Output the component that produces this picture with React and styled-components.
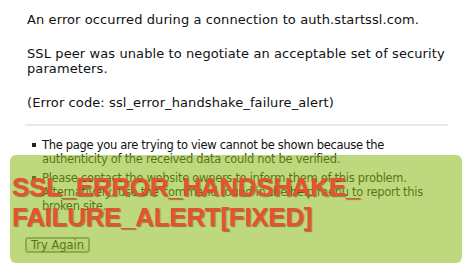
import styled, { createGlobalStyle } from "styled-components";

const GlobalStyle = createGlobalStyle`
  html, body {
    margin: 0;
    padding: 0;
    background: #ffffff;
  }
  body {
    font-family: "DejaVu Sans", "Liberation Sans", sans-serif;
    color: #111111;
  }
`

const Page = styled.div`
  position: relative;
  width: 474px;
  height: 273px;
  overflow: hidden;
  background: #ffffff;
`

const ErrorBody = styled.div`
  padding: 12px 0 0 27px;
`

const Messages = styled.div`
  display: flex;
  flex-direction: column;
  gap: 19px;
  font-size: 13px;
  line-height: 15px;
  letter-spacing: 0.1px;
`

const Message = styled.p`
  margin: 0;
`

const Divider = styled.hr`
  margin: 14px 26px 0 -2px;
  border: none;
  border-top: 2px solid #e8e8e8;
`

const Bullets = styled.ul`
  margin: 12px 0 0;
  padding: 0 0 0 15px;
  list-style: none;
  font-size: 11.5px;
  line-height: 14px;
  letter-spacing: -0.3px;
`

const Bullet = styled.li`
  position: relative;

  & + & {
    margin-top: 5px;
  }

  &::before {
    content: "";
    position: absolute;
    left: -10px;
    top: 5px;
    width: 4px;
    height: 4px;
    background: #222222;
  }
`

const RetryButton = styled.button`
  display: block;
  margin: 24px 0 0 -2px;
  width: 65px;
  height: 16px;
  padding: 0;
  font-family: "DejaVu Sans", "Liberation Sans", sans-serif;
  font-size: 11.5px;
  line-height: 12px;
  color: #111111;
  background: linear-gradient(#fdfdfd, #e6e6e6);
  border: 2px solid #8c9a86;
  border-radius: 3px;
`

const Overlay = styled.div`
  position: absolute;
  left: 10px;
  top: 155px;
  width: 452px;
  height: 108px;
  box-sizing: border-box;
  padding: 17px 0 0 2px;
  border-radius: 6px;
  background: rgba(140, 188, 26, 0.57);
`

const Headline = styled.h1`
  margin: 0;
  font-family: "Liberation Sans", Arial, sans-serif;
  font-weight: 700;
  font-size: 26px;
  line-height: 30px;
  letter-spacing: -0.3px;
  color: #e4532f;
  text-shadow: 1px 1px 1px rgba(110, 40, 20, 0.55);
`

function App() {
  return (
    <Page>
      <GlobalStyle />
      <ErrorBody>
        <Messages>
          <Message>An error occurred during a connection to auth.startssl.com.</Message>
          <Message>
            SSL peer was unable to negotiate an acceptable set of security
            <br />
            parameters.
          </Message>
          <Message>(Error code: ssl_error_handshake_failure_alert)</Message>
        </Messages>
        <Divider />
        <Bullets>
          <Bullet>
            The page you are trying to view cannot be shown because the
            <br />
            authenticity of the received data could not be verified.
          </Bullet>
          <Bullet>
            Please contact the website owners to inform them of this problem.
            <br />
            Alternatively, use the command found in the help menu to report this
            <br />
            broken site.
          </Bullet>
        </Bullets>
        <RetryButton>Try Again</RetryButton>
      </ErrorBody>
      <Overlay>
        <Headline>
          SSL_ERROR_HANDSHAKE_
          <br />
          FAILURE_ALERT[FIXED]
        </Headline>
      </Overlay>
    </Page>
  );
}

export default App;
